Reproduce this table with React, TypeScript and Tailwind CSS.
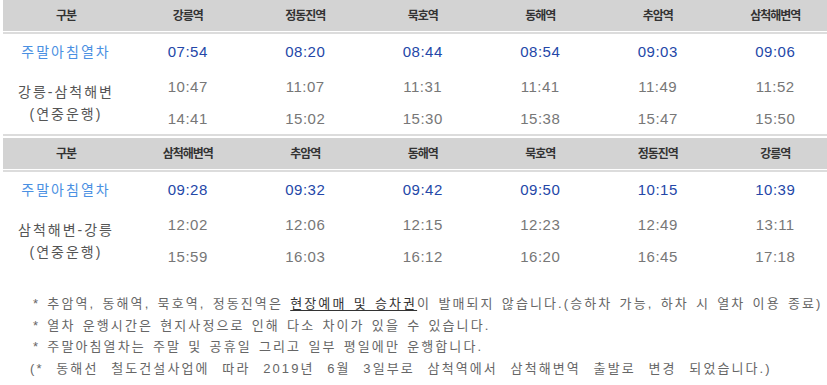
import React from "react";

type Block = {
  stations: string[];
  morning: string[];
  route: string;
  regular: string[][];
};

const blocks: Block[] = [
  {
    stations: ["강릉역", "정동진역", "묵호역", "동해역", "추암역", "삼척해변역"],
    morning: ["07:54", "08:20", "08:44", "08:54", "09:03", "09:06"],
    route: "강릉-삼척해변",
    regular: [
      ["10:47", "11:07", "11:31", "11:41", "11:49", "11:52"],
      ["14:41", "15:02", "15:30", "15:38", "15:47", "15:50"],
    ],
  },
  {
    stations: ["삼척해변역", "추암역", "동해역", "묵호역", "정동진역", "강릉역"],
    morning: ["09:28", "09:32", "09:42", "09:50", "10:15", "10:39"],
    route: "삼척해변-강릉",
    regular: [
      ["12:02", "12:06", "12:15", "12:23", "12:49", "13:11"],
      ["15:59", "16:03", "16:12", "16:20", "16:45", "17:18"],
    ],
  },
];

const grid = "grid grid-cols-[126px_repeat(6,117.5px)]";

function Timetable({ b, last }: { b: Block; last: boolean }) {
  return (
    <div className="w-[831px]">
      <div className={`${grid} h-[31px] items-center bg-[#d3d3d3] text-[12px] font-bold tracking-[-1px] text-[#333]`}>
        <div className="text-center">구분</div>
        {b.stations.map((s) => (
          <div key={s} className="text-center">
            {s}
          </div>
        ))}
      </div>
      <div className="mt-px h-[2px] bg-[#dcdcdc]" />

      {/* 주말아침열차 */}
      <div className={`${grid} h-[36px] items-center`}>
        <div className="text-center text-[14px] tracking-[2px] text-[#4a90e2]">주말아침열차</div>
        {b.morning.map((t, i) => (
          <div key={i} className="text-center text-[15px] tracking-[0.5px] text-[#2447a8]">
            {t}
          </div>
        ))}
      </div>

      {/* 연중운행 */}
      <div className={`${grid} grid-rows-[34px_30px]`}>
        <div className="row-span-2 flex flex-col items-center justify-center pt-px text-[14px] leading-[22px] tracking-[2px] text-[#555]">
          <span>{b.route}</span>
          <span>(연중운행)</span>
        </div>
        {b.regular[0].map((t, i) => (
          <div key={"a" + i} className="flex items-center justify-center text-[15px] tracking-[0.5px] text-[#777]">
            {t}
          </div>
        ))}
        {b.regular[1].map((t, i) => (
          <div key={"b" + i} className="flex items-center justify-center text-[15px] tracking-[0.5px] text-[#777]">
            {t}
          </div>
        ))}
      </div>
      {!last && <div className="mb-[2px] h-[2px] bg-[#dcdcdc]" />}
    </div>
  );
}

export default function App() {
  return (
    <div className="h-[385px] w-[827px] overflow-hidden bg-white font-['Liberation_Sans','Noto_Sans_CJK_KR',sans-serif]">
      <div className="pl-[3px]">
        {blocks.map((b, i) => (
          <Timetable key={i} b={b} last={i === blocks.length - 1} />
        ))}
      </div>
      <div className="mt-[21px] flex flex-col pl-[33px] text-[13px] leading-[21.5px] tracking-[2.1px] [word-spacing:1.5px] text-[#666] whitespace-nowrap">
        <p>
          * 추암역, 동해역, 묵호역, 정동진역은{" "}
          <span className="text-[#333] underline underline-offset-2">현장예매 및 승차권</span>이 발매되지
          않습니다.(승하차 가능, 하차 시 열차 이용 종료)
        </p>
        <p>* 열차 운행시간은 현지사정으로 인해 다소 차이가 있을 수 있습니다.</p>
        <p>* 주말아침열차는 주말 및 공휴일 그리고 일부 평일에만 운행합니다.</p>
        <p className="-ml-[3px] [word-spacing:7px]">(* 동해선 철도건설사업에 따라 2019년 6월 3일부로 삼척역에서 삼척해변역 출발로 변경 되었습니다.)</p>
      </div>
    </div>
  );
}
